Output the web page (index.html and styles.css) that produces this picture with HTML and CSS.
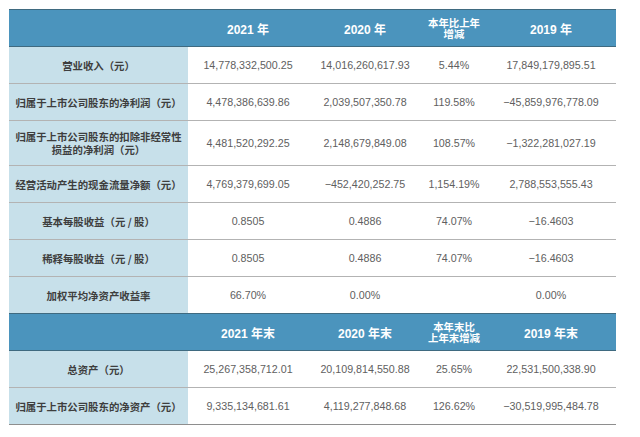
FILE: index.html
```html
<!DOCTYPE html>
<html lang="zh-CN">
<head>
<meta charset="utf-8">
<title>主要会计数据</title>
<link rel="stylesheet" href="styles.css">
</head>
<body>
<div class="tbl">
  <div class="row hdr">
    <div class="c lab"></div>
    <div class="c">2021 年</div>
    <div class="c">2020 年</div>
    <div class="c small"><span class="ln">本年比上年</span><span class="ln">增减</span></div>
    <div class="c">2019 年</div>
  </div>
  <div class="row">
    <div class="c lab">营业收入（元）</div>
    <div class="c">14,778,332,500.25</div>
    <div class="c">14,016,260,617.93</div>
    <div class="c">5.44%</div>
    <div class="c">17,849,179,895.51</div>
  </div>
  <div class="row">
    <div class="c lab">归属于上市公司股东的净利润（元）</div>
    <div class="c">4,478,386,639.86</div>
    <div class="c">2,039,507,350.78</div>
    <div class="c">119.58%</div>
    <div class="c">−45,859,976,778.09</div>
  </div>
  <div class="row tall">
    <div class="c lab two"><span class="ln">归属于上市公司股东的扣除非经常性</span><span class="ln">损益的净利润（元）</span></div>
    <div class="c">4,481,520,292.25</div>
    <div class="c">2,148,679,849.08</div>
    <div class="c">108.57%</div>
    <div class="c">−1,322,281,027.19</div>
  </div>
  <div class="row">
    <div class="c lab">经营活动产生的现金流量净额（元）</div>
    <div class="c">4,769,379,699.05</div>
    <div class="c">−452,420,252.75</div>
    <div class="c">1,154.19%</div>
    <div class="c">2,788,553,555.43</div>
  </div>
  <div class="row">
    <div class="c lab">基本每股收益（元 / 股）</div>
    <div class="c">0.8505</div>
    <div class="c">0.4886</div>
    <div class="c">74.07%</div>
    <div class="c">−16.4603</div>
  </div>
  <div class="row">
    <div class="c lab">稀释每股收益（元 / 股）</div>
    <div class="c">0.8505</div>
    <div class="c">0.4886</div>
    <div class="c">74.07%</div>
    <div class="c">−16.4603</div>
  </div>
  <div class="row nob">
    <div class="c lab">加权平均净资产收益率</div>
    <div class="c">66.70%</div>
    <div class="c">0.00%</div>
    <div class="c"></div>
    <div class="c">0.00%</div>
  </div>
  <div class="row hdr">
    <div class="c lab"></div>
    <div class="c">2021 年末</div>
    <div class="c">2020 年末</div>
    <div class="c small"><span class="ln">本年末比</span><span class="ln">上年末增减</span></div>
    <div class="c">2019 年末</div>
  </div>
  <div class="row">
    <div class="c lab">总资产（元）</div>
    <div class="c">25,267,358,712.01</div>
    <div class="c">20,109,814,550.88</div>
    <div class="c">25.65%</div>
    <div class="c">22,531,500,338.90</div>
  </div>
  <div class="row last">
    <div class="c lab">归属于上市公司股东的净资产（元）</div>
    <div class="c">9,335,134,681.61</div>
    <div class="c">4,119,277,848.68</div>
    <div class="c">126.62%</div>
    <div class="c">−30,519,995,484.78</div>
  </div>
</div>
</body>
</html>
```

FILE: styles.css
```css
html, body {
  margin: 0;
  padding: 0;
  background: #ffffff;
}

body {
  font-family: "Liberation Sans", "Noto Sans CJK SC", sans-serif;
  color: #606060;
}

.tbl {
  margin: 9px 0 0 9px;
  width: 607px;
}

.row {
  display: grid;
  grid-template-columns: 179px 120px 114px 64px 130px;
  height: 37px;
  box-sizing: border-box;
  border-bottom: 1px solid #b3b3b3;
}

.row.tall {
  height: 45px;
}

.row.nob {
  height: 36px;
  border-bottom: none;
}

.row.last {
  border-bottom-color: #8e8e8e;
}

.c {
  display: flex;
  align-items: center;
  justify-content: center;
  text-align: center;
  font-size: 10.7px;
  white-space: nowrap;
}

.lab {
  background: #c7e0ea;
  font-family: "Noto Sans CJK SC", "Liberation Sans", sans-serif;
  font-weight: 700;
  font-size: 10.4px;
  line-height: 13px;
  color: #3e3e3e;
}

.two,
.small {
  flex-direction: column;
}

.ln {
  display: block;
}

.row.hdr {
  height: 38px;
  background: #4b94bd;
  border-top: 1px solid #3f6a80;
  border-bottom: 1px solid #3f6a80;
}

.hdr .c {
  font-family: "Liberation Sans", "Noto Sans CJK SC", sans-serif;
  font-weight: 700;
  font-size: 12px;
  color: #ffffff;
}

.hdr .lab {
  background: transparent;
}

.hdr .small {
  font-family: "Noto Sans CJK SC", sans-serif;
  font-size: 10.4px;
  line-height: 11.5px;
}
```
